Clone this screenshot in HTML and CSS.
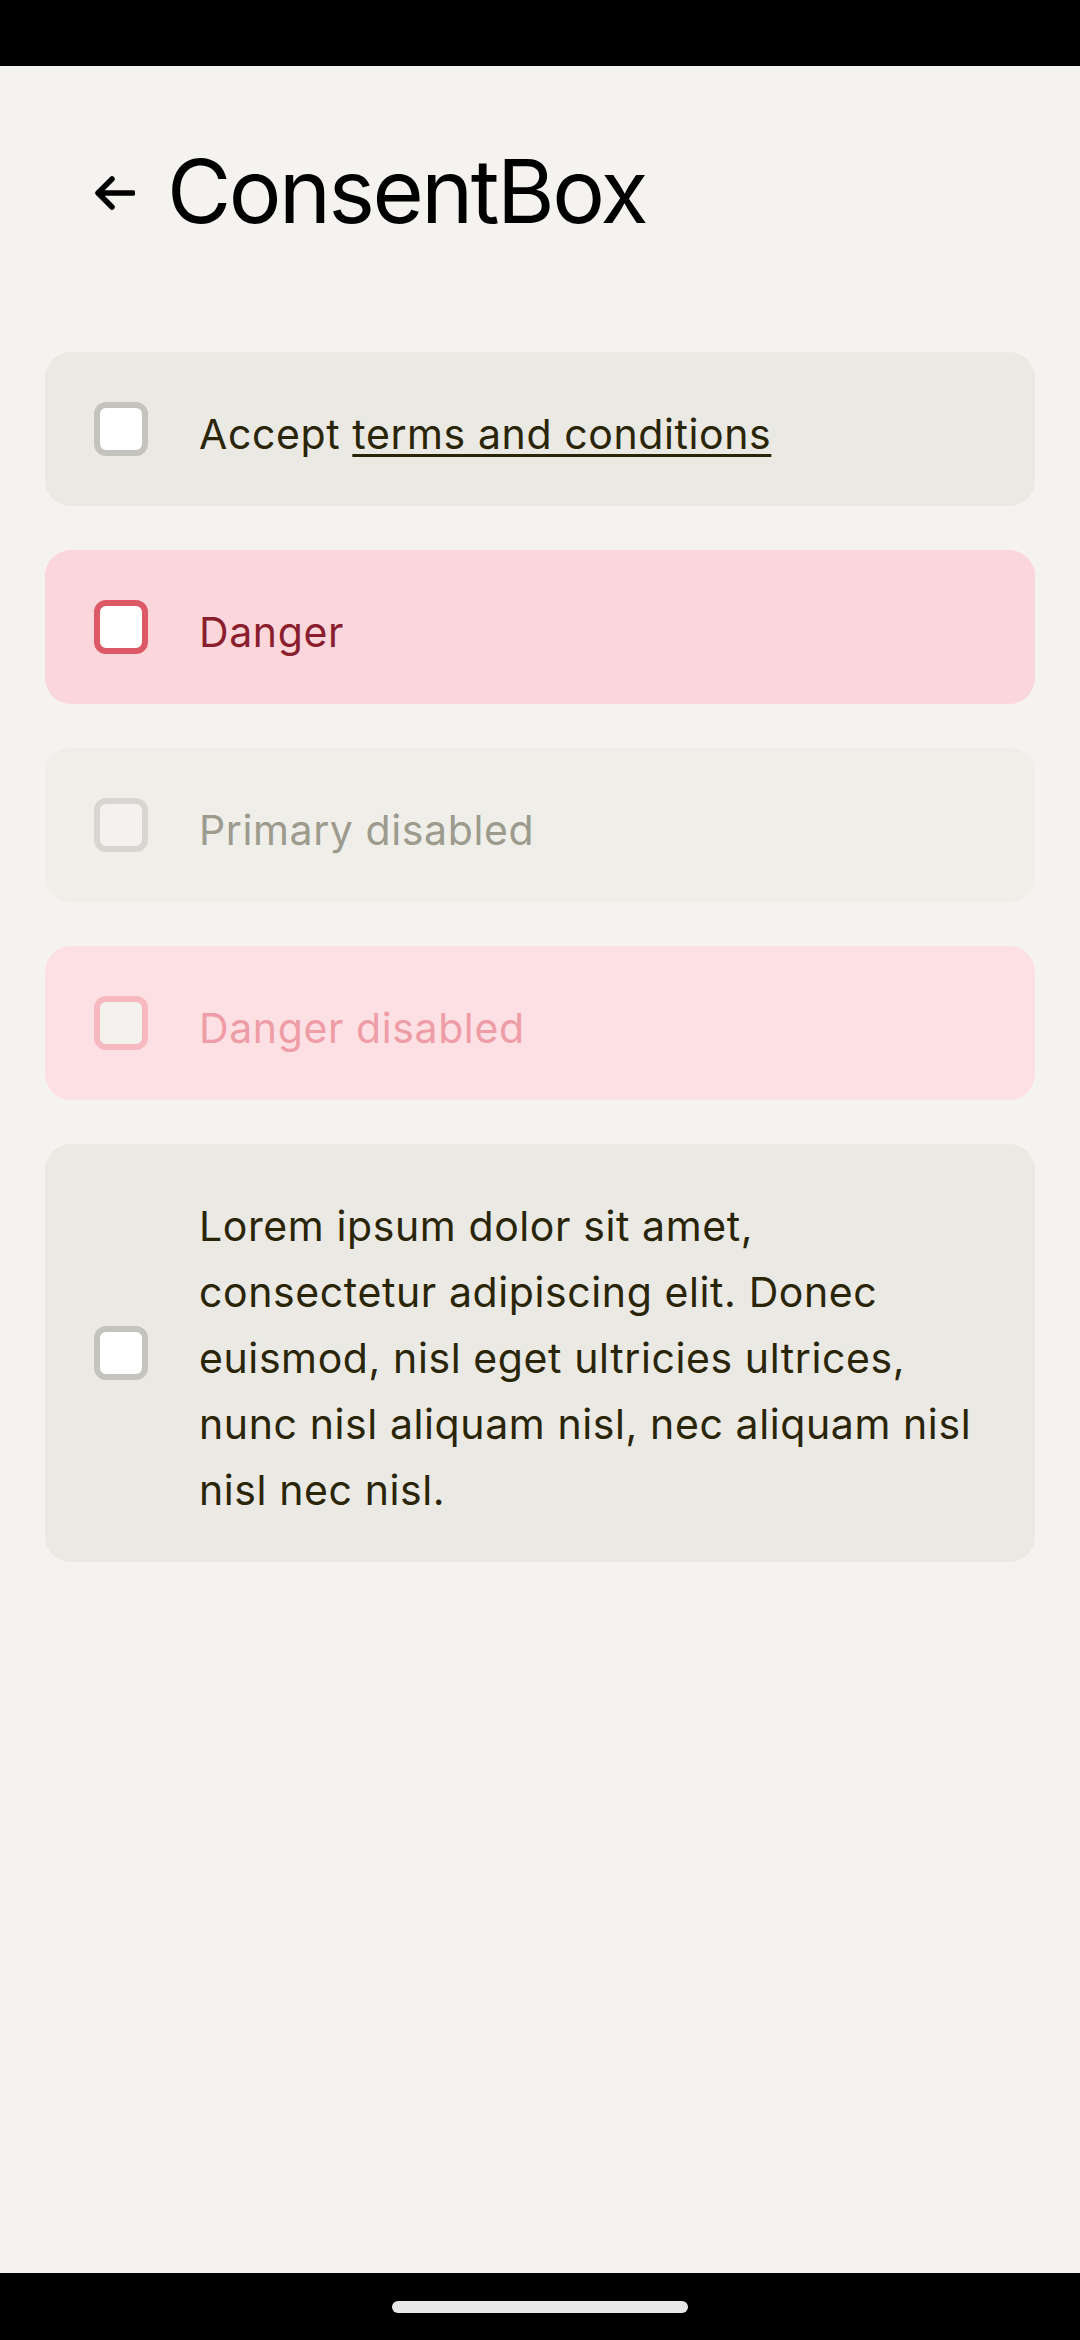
FILE: index.html
```html
<!DOCTYPE html>
<html lang="en">
<head>
<meta charset="utf-8">
<title>ConsentBox</title>
<link rel="stylesheet" href="styles.css">
</head>
<body>
<div class="status-bar"></div>
<main class="screen">
  <header class="header">
    <svg class="back" viewBox="0 0 40 34" width="40" height="34" aria-hidden="true">
      <path d="M38 17H4M17 3L3 17l14 14" fill="none" stroke="#000" stroke-width="5.5" stroke-linecap="round" stroke-linejoin="round"/>
    </svg>
    <h1 class="title">ConsentBox</h1>
  </header>
  <section class="list">
    <label class="card">
      <span class="box"></span>
      <span class="text">Accept <u class="link">terms and conditions</u></span>
    </label>
    <label class="card danger">
      <span class="box"></span>
      <span class="text">Danger</span>
    </label>
    <label class="card disabled">
      <span class="box"></span>
      <span class="text">Primary disabled</span>
    </label>
    <label class="card danger-disabled">
      <span class="box"></span>
      <span class="text">Danger disabled</span>
    </label>
    <label class="card">
      <span class="box"></span>
      <span class="text">Lorem ipsum dolor sit amet, consectetur adipiscing elit. Donec euismod, nisl eget ultricies ultrices, nunc nisl aliquam nisl, nec aliquam nisl nisl nec nisl.</span>
    </label>
  </section>
</main>
<div class="nav-bar"><span class="pill"></span></div>
</body>
</html>
```
FILE: styles.css
```css
* { box-sizing: border-box; }
html, body { margin: 0; padding: 0; }
body {
  width: 1080px;
  height: 2340px;
  display: flex;
  flex-direction: column;
  background: #f4f3ef;
  font-family: Inter, "Noto Sans", sans-serif;
  color: #2b2508;
}
.status-bar { height: 66px; background: #000; flex: none; }
.screen { flex: 1; display: flex; flex-direction: column; }
.header {
  display: flex;
  align-items: flex-start;
  gap: 32px;
  padding: 72px 0 0 95px;
  height: 286px;
}
.back { margin-top: 38px; flex: none; }
.title {
  margin: 0;
  font-size: 88px;
  line-height: 107px;
  font-weight: 400;
  color: #000;
  letter-spacing: -2.5px;
}
.list {
  display: flex;
  flex-direction: column;
  gap: 44px;
  padding: 0 45px;
}
.card {
  display: flex;
  align-items: center;
  gap: 51px;
  padding: 44px 49px;
  border-radius: 26px;
  background: #eae9e4;
}
.box {
  flex: none;
  width: 54px;
  height: 54px;
  border: 6px solid #c4c3bd;
  border-radius: 12px;
  background: #fff;
}
.text {
  font-size: 41px;
  line-height: 66px;
  letter-spacing: 0.6px;
  padding-top: 5px;
  margin-bottom: -5px;
}
.link {
  text-decoration-thickness: 3px;
  text-underline-offset: 5px;
}
.danger { background: #fbd7dc; }
.danger .box { border-color: #dd5966; }
.danger .text { color: #8a1e2e; }
.disabled { background: #efeee9; }
.disabled .box { border-color: #d7d6d0; background: #f3f2ee; }
.disabled .text { color: #9c9b8e; }
.danger-disabled { background: #fde0e3; }
.danger-disabled .box { border-color: #f6b9c0; background: #f3f2ee; }
.danger-disabled .text { color: #ee9ca5; }
.nav-bar {
  flex: none;
  height: 67px;
  background: #000;
  display: flex;
  justify-content: center;
  padding-top: 28px;
}
.pill {
  width: 296px;
  height: 12px;
  border-radius: 6px;
  background: #e8e8e8;
}
```
